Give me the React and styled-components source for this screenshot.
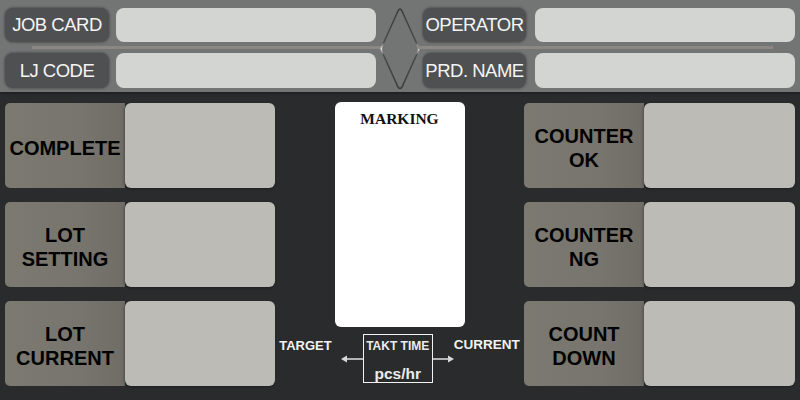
import React from "react";
import styled, { createGlobalStyle } from "styled-components";

const Global = createGlobalStyle`
  html, body { margin: 0; padding: 0; background: #2a2b2d; }
  body { width: 800px; height: 400px; overflow: hidden; font-family: "Liberation Sans", Arial, sans-serif; }
`;

const Screen = styled.div`
  width: 800px;
  height: 400px;
  display: flex;
  flex-direction: column;
  background: #2a2b2d;
`;

const Header = styled.div`
  height: 92px;
  box-sizing: border-box;
  background: #737474;
  padding: 8px 5px 0 5px;
  display: grid;
  grid-template-columns: 371px 1fr 372px;
  box-shadow: 0 1px 3px rgba(0,0,0,0.4);
  position: relative;
  z-index: 1;
`;

const HeaderHalf = styled.div`
  display: flex;
  flex-direction: column;
`;

const HeaderRow = styled.div`
  display: flex;
  gap: ${p => p.$gap}px;
  height: ${p => p.$h}px;
`;

const HeaderLabel = styled.div`
  width: ${p => p.$w}px;
  flex: none;
  background: #4f5051;
  border-radius: 8px;
  box-shadow: 0 0 2px 1px rgba(79,80,81,0.8);
  color: #f4f4f4;
  font-size: 18.5px;
  letter-spacing: -0.5px;
  display: flex;
  align-items: center;
  justify-content: center;
  white-space: nowrap;
`;

const HeaderInput = styled.div`
  flex: 1;
  background: #d3d5d3;
  border-radius: 8px;
`;

const Separator = styled.div`
  height: 3px;
  margin: 4px ${p => p.$mr}px 4px ${p => p.$ml}px;
  background: #8c8783;
`;

const DiamondCell = styled.div`
  display: flex;
  justify-content: center;
  align-items: flex-start;
  margin-top: -1px;
`;

const Body = styled.div`
  flex: 1;
  display: grid;
  grid-template-columns: 270px 1fr 271px;
  padding: 11px 5px 0 5px;
`;

const Column = styled.div`
  display: flex;
  flex-direction: column;
  gap: 14px;
`;

const Tile = styled.div`
  height: 85px;
  display: flex;
  border-radius: 5px;
`;

const TileLabel = styled.div`
  width: 120px;
  flex: none;
  box-sizing: border-box;
  padding-top: 5px;
  background: linear-gradient(90deg, #7b7970 0%, #77756d 60%, #6f6d66 100%);
  border-radius: 5px 0 0 5px;
  color: #000;
  font-weight: 700;
  font-size: 20px;
  line-height: 24px;
  text-align: center;
  display: flex;
  align-items: center;
  justify-content: center;
`;

const TileValue = styled.div`
  flex: 1;
  background: #bcbbb6;
  border-radius: 6px;
  box-shadow: -1px 1px 3px rgba(0,0,0,0.3);
`;

const Center = styled.div`
  display: flex;
  flex-direction: column;
  align-items: center;
`;

const Card = styled.div`
  width: 130px;
  height: 225px;
  margin-top: -1px;
  background: #ffffff;
  border-radius: 6px;
  display: flex;
  justify-content: center;
`;

const CardTitle = styled.div`
  margin-top: 8px;
  font-family: "Liberation Serif", "Times New Roman", serif;
  font-weight: 700;
  font-size: 15.5px;
  color: #111;
`;

const TaktRow = styled.div`
  display: flex;
  align-items: flex-start;
  margin-top: 7px;
`;

const SideText = styled.div`
  color: #f2f2f2;
  font-weight: 700;
  font-size: ${p => p.$size}px;
  margin-top: ${p => p.$top}px;
  margin-right: ${p => p.$mr || 0}px;
`;

const Arrow = styled.svg`
  margin-top: 21px;
  display: block;
`;

const TaktBox = styled.div`
  width: 70px;
  height: 49px;
  box-sizing: border-box;
  border: 1.5px solid #f2f2f2;
  color: #ececec;
  font-weight: 700;
  display: flex;
  flex-direction: column;
  align-items: center;
`;

const TaktTitle = styled.div`
  font-size: 12px;
  margin-top: 4px;
`;

const TaktUnit = styled.div`
  font-size: 15.5px;
  margin-top: 12px;
`;

const Diamond = () => (
  <svg width="44" height="84" viewBox="0 0 44 84">
    <defs>
      <linearGradient id="dg" x1="0" y1="0" x2="0" y2="1">
        <stop offset="0" stopColor="#3c3d3e" />
        <stop offset="0.42" stopColor="#4a4b4c" />
        <stop offset="0.5" stopColor="#e6e6e6" />
        <stop offset="0.58" stopColor="#4a4b4c" />
        <stop offset="1" stopColor="#3c3d3e" />
      </linearGradient>
    </defs>
    <path
      d="M22 2 Q23 2 24 4 L40.5 40.5 Q41 42 40.5 43.5 L24 80 Q22 83 20 80 L3.5 43.5 Q3 42 3.5 40.5 L20 4 Q21 2 22 2 Z"
      fill="none"
      stroke="url(#dg)"
      strokeWidth="1.6"
    />
  </svg>
);

const LeftArrow = () => (
  <Arrow width="22" height="8" viewBox="0 0 22 8">
    <line x1="3" y1="4" x2="22" y2="4" stroke="#b4b4b4" strokeWidth="2" />
    <path d="M0 4 L6 0.5 L6 7.5 Z" fill="#d8d8d8" />
  </Arrow>
);

const RightArrow = () => (
  <Arrow width="21" height="8" viewBox="0 0 21 8">
    <line x1="0" y1="4" x2="18" y2="4" stroke="#b4b4b4" strokeWidth="2" />
    <path d="M21 4 L15 0.5 L15 7.5 Z" fill="#d8d8d8" />
  </Arrow>
);

const leftTiles = [["COMPLETE"], ["LOT", "SETTING"], ["LOT", "CURRENT"]];
const rightTiles = [["COUNTER", "OK"], ["COUNTER", "NG"], ["COUNT", "DOWN"]];

const TileItem = ({ lines }) => (
  <Tile>
    <TileLabel>
      <span>
        {lines.map((l, i) => (
          <React.Fragment key={i}>
            {i > 0 && <br />}
            {l}
          </React.Fragment>
        ))}
      </span>
    </TileLabel>
    <TileValue />
  </Tile>
);

export default function App() {
  return (
    <>
      <Global />
      <Screen>
        <Header>
          <HeaderHalf>
            <HeaderRow $gap={7} $h={34}>
              <HeaderLabel $w={104}>JOB CARD</HeaderLabel>
              <HeaderInput />
            </HeaderRow>
            <Separator $ml={27} $mr={-5} />
            <HeaderRow $gap={7} $h={35}>
              <HeaderLabel $w={104}>LJ CODE</HeaderLabel>
              <HeaderInput />
            </HeaderRow>
          </HeaderHalf>
          <DiamondCell>
            <Diamond />
          </DiamondCell>
          <HeaderHalf>
            <HeaderRow $gap={9} $h={34}>
              <HeaderLabel $w={103}>OPERATOR</HeaderLabel>
              <HeaderInput />
            </HeaderRow>
            <Separator $ml={-6} $mr={22} />
            <HeaderRow $gap={9} $h={35}>
              <HeaderLabel $w={103}>PRD. NAME</HeaderLabel>
              <HeaderInput />
            </HeaderRow>
          </HeaderHalf>
        </Header>
        <Body>
          <Column>
            {leftTiles.map((t, i) => <TileItem key={i} lines={t} />)}
          </Column>
          <Center>
            <Card>
              <CardTitle>MARKING</CardTitle>
            </Card>
            <TaktRow>
              <SideText $size={13} $top={4} $mr={9}>TARGET</SideText>
              <LeftArrow />
              <TaktBox>
                <TaktTitle>TAKT TIME</TaktTitle>
                <TaktUnit>pcs/hr</TaktUnit>
              </TaktBox>
              <RightArrow />
              <SideText $size={13.5} $top={3}>CURRENT</SideText>
            </TaktRow>
          </Center>
          <Column>
            {rightTiles.map((t, i) => <TileItem key={i} lines={t} />)}
          </Column>
        </Body>
      </Screen>
    </>
  );
}
